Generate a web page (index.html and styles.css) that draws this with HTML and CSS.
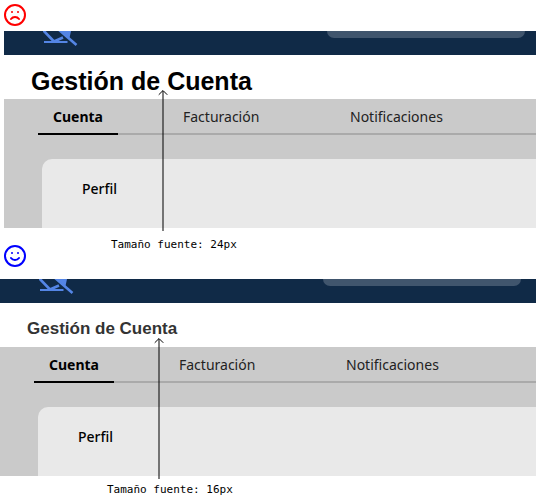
FILE: index.html
```html
<!DOCTYPE html>
<html lang="es">
<head>
<meta charset="utf-8">
<title>Tamaño de fuente del título</title>
<link rel="stylesheet" href="styles.css">
</head>
<body>
<main>
  <figure class="example example-bad">
    <svg class="face" viewBox="0 0 24 24" aria-hidden="true"><circle cx="12" cy="12" r="10"/><path d="M16 16s-1.500-2-4-2-4 2-4 2M9 9h.01M15 9h.01"/></svg>
    <div class="screen">
      <header class="topbar">
        <svg class="logo" viewBox="0 0 36 16" aria-hidden="true"><path class="logo-fill" d="M17 0H28L26.500 7Z"/><path class="logo-base" d="M1 11H24.500"/><path d="M-1-2L11 10.500L20 6.500M15-2L33.500 14"/></svg>
        <div class="search"></div>
      </header>
      <h2 class="title">Gestión de Cuenta</h2>
      <div class="content">
        <nav class="tabs">
          <button class="tab active">Cuenta</button>
          <button class="tab">Facturación</button>
          <button class="tab">Notificaciones</button>
        </nav>
        <section class="card"><h3>Perfil</h3></section>
      </div>
      <svg class="arrow" viewBox="0 0 10 141" aria-hidden="true"><path class="shaft" d="M5 1V141"/><path d="M1 4.500L5 .5L9 4.500"/></svg>
    </div>
    <figcaption>Tamaño fuente: 24px</figcaption>
  </figure>
  <figure class="example example-good">
    <svg class="face" viewBox="0 0 24 24" aria-hidden="true"><circle cx="12" cy="12" r="10"/><path d="M8 14s1.500 2 4 2 4-2 4-2M9 9h.01M15 9h.01"/></svg>
    <div class="screen">
      <header class="topbar">
        <svg class="logo" viewBox="0 0 36 16" aria-hidden="true"><path class="logo-fill" d="M17 0H28L26.500 7Z"/><path class="logo-base" d="M1 11H24.500"/><path d="M-1-2L11 10.500L20 6.500M15-2L33.500 14"/></svg>
        <div class="search"></div>
      </header>
      <h2 class="title">Gestión de Cuenta</h2>
      <div class="content">
        <nav class="tabs">
          <button class="tab active">Cuenta</button>
          <button class="tab">Facturación</button>
          <button class="tab">Notificaciones</button>
        </nav>
        <section class="card"><h3>Perfil</h3></section>
      </div>
      <svg class="arrow" viewBox="0 0 10 141" aria-hidden="true"><path class="shaft" d="M5 1V141"/><path d="M1 4.500L5 .5L9 4.500"/></svg>
    </div>
    <figcaption>Tamaño fuente: 16px</figcaption>
  </figure>
</main>
</body>
</html>
```
FILE: styles.css
```css
* { box-sizing: border-box; }
body { margin: 0; background: #fff; color: #000; font-family: "Noto Sans", sans-serif; font-size: 14px; overflow-x: hidden; }
svg { display: block; fill: none; stroke-linecap: round; stroke-linejoin: round; }
.example { margin: 0; }
.example-bad { padding: 3px 0 0 4px; color: #f00; }
.example-good { margin-top: -9px; color: #00f; }
.face { width: 24px; height: 24px; stroke: currentColor; stroke-width: 2; }
.example-bad .face { margin: 0 0 4px -1px; }
.example-good .face { margin: 0 0 11px 3px; }
.screen { position: relative; color: #000; }
.topbar { display: flex; justify-content: space-between; height: 24px; padding: 0 15px 0 39px; background: #102a47; overflow: hidden; }
.example-bad .topbar { padding-right: 11px; }
.logo { width: 36px; height: 16px; stroke: #5485e5; stroke-width: 2.6; stroke-linecap: butt; }
.logo-base { stroke-width: 2; }
.logo-fill { fill: #5485e5; stroke: none; }
.search { width: 198px; height: 7px; border-radius: 0 0 8px 8px; background: #40556d; }
.title { margin: 0; padding: 0 27px; height: 44px; color: #333; font: bold 17px/52px "Liberation Sans", Arial, sans-serif; }
.example-bad .title { color: #000; font-size: 25px; }
.content { display: flow-root; background: #cacaca; }
.tabs { display: grid; grid-template-columns: 131px 167px 1fr; height: 36px; margin-left: 34px; border-bottom: 2px solid #aaa; }
.tab { justify-self: start; height: 36px; min-width: 80px; padding: 2px 14px 0; border: 0; border-bottom: 2px solid transparent; background: none; color: #222; font: 14px/32px "Noto Sans", sans-serif; }
.tab.active { border-color: #000; color: #000; font-weight: bold; }
.card { margin: 24px 0 0 38px; height: 69px; padding: 20px 40px; border-radius: 10px 0 0 0; background: #e9e9e9; }
.card h3 { margin: 0; font-size: 14px; line-height: 20px; font-weight: 500; }
.arrow { position: absolute; left: 154px; top: 59px; width: 10px; height: 141px; stroke: #000; }
.shaft { stroke-width: 2; stroke-opacity: .5; stroke-linecap: butt; }
figcaption { padding: 9px 0 0 107px; color: #000; font: 11px/16px "DejaVu Sans Mono", monospace; }
.example-good figcaption { padding-top: 6px; }
```
